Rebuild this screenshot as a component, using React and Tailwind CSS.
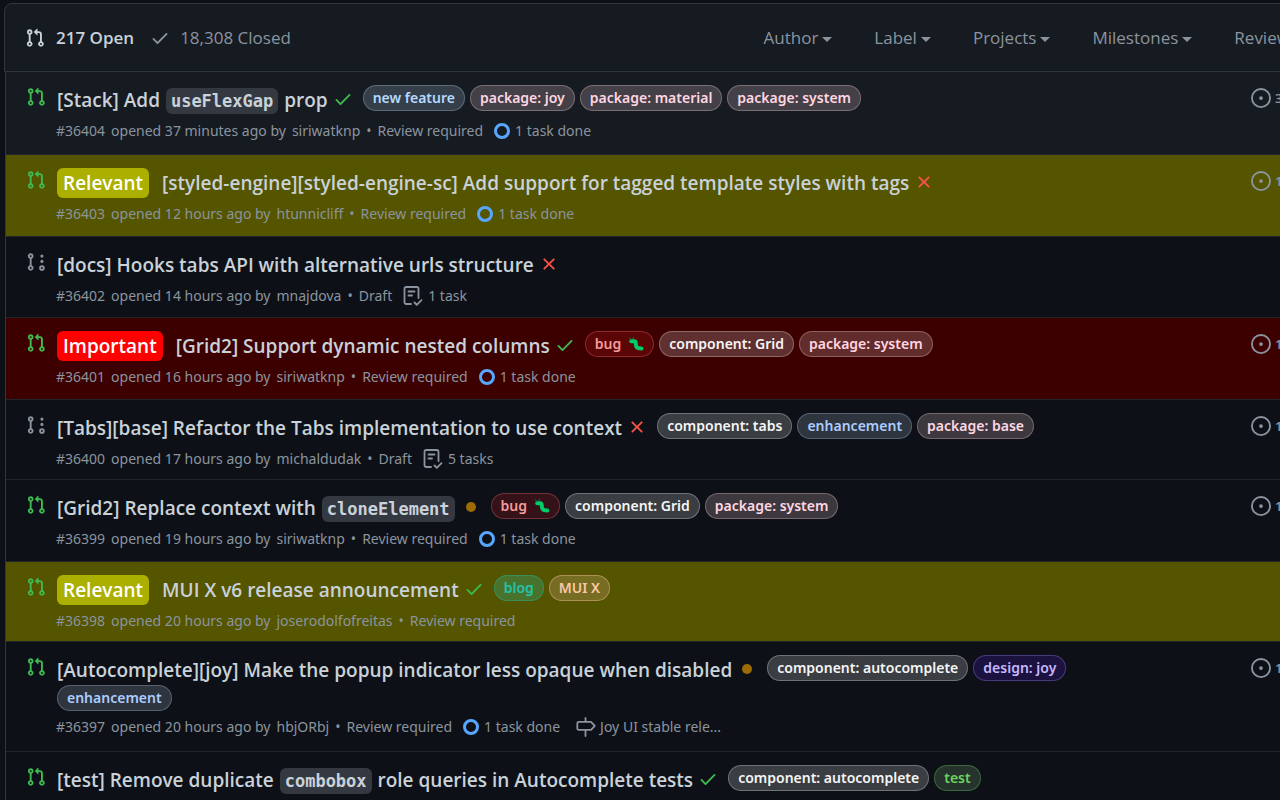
const PATHS = {
  pr: "M7.177 3.073L9.573.677A.25.25 0 0110 .854v4.792a.25.25 0 01-.427.177L7.177 3.427a.25.25 0 010-.354zM3.75 2.5a.75.75 0 100 1.5.75.75 0 000-1.5zm-2.25.75a2.25 2.25 0 113 2.122v5.256a2.251 2.251 0 11-1.5 0V5.372A2.25 2.25 0 011.5 3.25zM11 2.5h-1V4h1a1 1 0 011 1v5.628a2.251 2.251 0 101.5 0V5A2.5 2.5 0 0011 2.5zm1 10.25a.75.75 0 111.5 0 .75.75 0 01-1.5 0zM3.75 12a.75.75 0 100 1.5.75.75 0 000-1.5z",
  draft:
    "M3.75 1a2.25 2.25 0 00-.75 4.372v5.256a2.251 2.251 0 101.5 0V5.372A2.25 2.25 0 003.75 1zM3 3.25a.75.75 0 111.5 0 .75.75 0 01-1.5 0zM3.75 12a.75.75 0 100 1.5.75.75 0 000-1.5zM12.75 15a2.25 2.25 0 100-4.5 2.25 2.25 0 000 4.5zm0-3a.75.75 0 100 1.5.75.75 0 000-1.5zM14 7.5a1.25 1.25 0 11-2.5 0 1.25 1.25 0 012.5 0zm0-4.25a1.25 1.25 0 11-2.5 0 1.25 1.25 0 012.5 0z",
  check:
    "M13.78 4.22a.75.75 0 010 1.06l-7.25 7.25a.75.75 0 01-1.06 0L2.22 9.28a.75.75 0 011.06-1.06L6 10.94l6.72-6.72a.75.75 0 011.06 0z",
  x: "M3.72 3.72a.75.75 0 011.06 0L8 6.94l3.22-3.22a.75.75 0 111.06 1.06L9.06 8l3.22 3.22a.75.75 0 11-1.06 1.06L8 9.06l-3.22 3.22a.75.75 0 01-1.06-1.06L6.94 8 3.72 4.78a.75.75 0 010-1.06z",
  dot: "M8 4a4 4 0 100 8 4 4 0 000-8z",
  issue:
    "M8 9.5a1.5 1.5 0 100-3 1.5 1.5 0 000 3zM8 0a8 8 0 100 16A8 8 0 008 0zM1.5 8a6.5 6.5 0 1113 0 6.5 6.5 0 01-13 0z",
};

function Octicon({ name, className }) {
  return (
    <svg viewBox="0 0 16 16" fill="currentColor" fillRule="evenodd" aria-hidden="true" className={"shrink-0 " + className}>
      <path d={PATHS[name]} />
    </svg>
  );
}

function TaskListIcon() {
  return (
    <svg viewBox="0 0 20 20" fill="none" stroke="currentColor" strokeWidth="1.8" strokeLinecap="round" strokeLinejoin="round" aria-hidden="true" className="size-5 shrink-0">
      <path d="M8 18H3.200a1.700 1.700 0 0 1-1.700-1.700V2.700A1.700 1.700 0 0 1 3.200 1h10.600a1.700 1.700 0 0 1 1.700 1.700v9.300M5.500 5.500h6M5.500 9.500h3.500M11.500 16.500l2.300 2.300 4.700-4.700" />
    </svg>
  );
}

function MilestoneIcon() {
  return (
    <svg viewBox="0 0 20 20" fill="none" stroke="currentColor" strokeWidth="1.8" strokeLinecap="round" strokeLinejoin="round" aria-hidden="true" className="size-5 shrink-0">
      <path d="M9.500 1v3.500M9.500 13.500v5.500M2.800 4.900h12.200l3.800 4-3.800 4H2.800a1.500 1.500 0 0 1-1.500-1.500V6.400a1.500 1.500 0 0 1 1.500-1.500z" />
    </svg>
  );
}

function Bug() {
  return (
    <svg viewBox="0 0 16 16" aria-hidden="true" className="ml-[2px] size-4 shrink-0">
      <path d="M3.200 5.300h3C8.800 5.300 7 9 8.600 11c1 1.300 2.600 1.500 4.800 1.500" fill="none" stroke="#00cc6a" strokeWidth="4" strokeLinecap="round" strokeLinejoin="round" />
      <path d="M1.200 1.600l1.600 1.800M5.600 1.200l-1 1.900" stroke="#0a8a4a" strokeWidth="1" />
    </svg>
  );
}

const TONES = {
  blue: "bg-[#b5d2ea]/20 border-[#b5d2ea]/30 text-[#b5d9ff]",
  steel: "bg-[#b5c9e3]/20 border-[#b5c9e3]/30 text-[#adccff]",
  pink: "bg-[#fad6dc]/20 border-[#fad6dc]/30 text-[#ffd6e2]",
  white: "bg-[#f0f0f0]/20 border-[#f0f0f0]/30 text-[#f5f5f5]",
  red: "bg-[#d11a20]/20 border-[#f87c7e]/30 text-[#f89a9b]",
  teal: "bg-[#2fb893]/30 border-[#1fb8a3]/40 text-[#22c3ad]",
  peach: "bg-[#fac8a8]/20 border-[#fac8a8]/40 text-[#fac8a8]",
  purple: "bg-[#1c1240] border-[#8a78d8]/40 text-[#c5b8ff]",
  green: "bg-[#8ab884]/20 border-[#5fb85a]/40 text-[#6bd35e]",
};

function Label({ tone, bug, children }) {
  return (
    <a href="#label" className={"inline-flex h-[26px] items-center gap-[5px] rounded-full border px-[9px] font-['Noto_Sans',sans-serif] text-[14px] leading-5 font-semibold whitespace-nowrap " + TONES[tone]}>
      {children}
      {bug && <Bug />}
    </a>
  );
}

function Code({ children }) {
  return (
    <code className="mx-px rounded-md bg-[#343941] px-[5px] py-[3px] font-['DejaVu_Sans_Mono',monospace] text-[17px] leading-5 font-bold">
      {children}
    </code>
  );
}

const CHIPS = {
  Relevant: "bg-[#abaf00]",
  Important: "bg-[#ff0000]",
};

const STATUS = {
  check: "text-[#3fb950]",
  x: "text-[#f85149]",
  dot: "text-[#9e6a03]",
};

const ROWS = [
  {
    id: 36404, bg: "bg-[#161b22] min-h-[83px]", title: <>[Stack] Add <Code>useFlexGap</Code> prop</>, status: "check",
    labels: [["new feature", "blue"], ["package: joy", "pink"], ["package: material", "pink"], ["package: system", "pink"]],
    opened: "opened 37 minutes ago by", author: "siriwatknp", review: "Review required", done: true, linked: 3,
  },
  {
    id: 36403, bg: "bg-[#555500] min-h-[82px]", chip: "Relevant", title: "[styled-engine][styled-engine-sc] Add support for tagged template styles with tags", status: "x",
    labels: [], opened: "opened 12 hours ago by", author: "htunnicliff", review: "Review required", done: true, linked: 1,
  },
  {
    id: 36402, bg: "min-h-[81px]", draft: true, title: "[docs] Hooks tabs API with alternative urls structure", status: "x",
    labels: [], opened: "opened 14 hours ago by", author: "mnajdova", review: "Draft", tasks: "1 task",
  },
  {
    id: 36401, bg: "bg-[#3d0000] min-h-[82px]", chip: "Important", title: "[Grid2] Support dynamic nested columns", status: "check",
    labels: [["bug", "red", true], ["component: Grid", "white"], ["package: system", "pink"]],
    opened: "opened 16 hours ago by", author: "siriwatknp", review: "Review required", done: true, linked: 1,
  },
  {
    id: 36400, bg: "min-h-[80px]", draft: true, title: "[Tabs][base] Refactor the Tabs implementation to use context", status: "x",
    labels: [["component: tabs", "white"], ["enhancement", "steel"], ["package: base", "pink"]],
    opened: "opened 17 hours ago by", author: "michaldudak", review: "Draft", tasks: "5 tasks", linked: 1,
  },
  {
    id: 36399, bg: "min-h-[82px]", title: <>[Grid2] Replace context with <Code>cloneElement</Code></>, status: "dot",
    labels: [["bug", "red", true], ["component: Grid", "white"], ["package: system", "pink"]],
    opened: "opened 19 hours ago by", author: "siriwatknp", review: "Review required", done: true, linked: 1,
  },
  {
    id: 36398, bg: "bg-[#555500] min-h-[80px]", chip: "Relevant", title: "MUI X v6 release announcement", status: "check",
    labels: [["blog", "teal"], ["MUI X", "peach"]],
    opened: "opened 20 hours ago by", author: "joserodolfofreitas", review: "Review required",
  },
  {
    id: 36397, bg: "min-h-[110px]", title: "[Autocomplete][joy] Make the popup indicator less opaque when disabled", status: "dot",
    labels: [["component: autocomplete", "white"], ["design: joy", "purple"], ["enhancement", "steel"]],
    opened: "opened 20 hours ago by", author: "hbjORbj", review: "Review required", done: true, milestone: "Joy UI stable rele...", linked: 1,
  },
  {
    id: 36396, bg: "min-h-[80px]", title: <>[test] Remove duplicate <Code>combobox</Code> role queries in Autocomplete tests</>, status: "check",
    labels: [["component: autocomplete", "white"], ["test", "green"]],
  },
];

function Row({ row }) {
  return (
    <li className={"flex items-start border-b border-[#21262d] pl-5 " + row.bg}>
      <Octicon name={row.draft ? "draft" : "pr"} className={"mt-[15px] size-5 " + (row.draft ? "text-[#8b949e]" : "text-[#3fb950]")} />
      <div className="min-w-0 flex-1 pt-[13px] pl-[10px]">
        <div className="flex flex-wrap items-start gap-x-[5px] pl-px">
          {row.chip && (
            <span className={"mr-2 rounded-md px-[6px] text-[19px] leading-[30px] font-semibold text-white " + CHIPS[row.chip]}>
              {row.chip}
            </span>
          )}
          <a href="#pull" className="text-[19px] leading-[30px] font-semibold text-[#c9d1d9]">
            {row.title}
          </a>
          <Octicon name={row.status} className={"mt-1 mr-[5px] size-5 " + STATUS[row.status]} />
          {row.labels.map(([text, tone, bug]) => (
            <Label key={text} tone={tone} bug={bug}>{text}</Label>
          ))}
        </div>
        {row.opened && (
          <div className="flex items-center gap-[11px] pt-1 font-['Noto_Sans',sans-serif] text-[14px] leading-6 text-[#8b949e]">
            <div className="flex gap-[6px]">
              <span>#{row.id}</span>
              <span>{row.opened}</span>
              <a href="#author">{row.author}</a>
              <span>•</span>
              <span>{row.review}</span>
            </div>
            {row.done && (
              <span className="flex items-center gap-[5px]">
                <span className="size-4 rounded-full border-3 border-[#58a6ff]" />
                1 task done
              </span>
            )}
            {row.tasks && <span className="flex items-center gap-[5px]"><TaskListIcon />{row.tasks}</span>}
            {row.milestone && <a href="#milestone" className="ml-[5px] flex items-center gap-1"><MilestoneIcon />{row.milestone}</a>}
          </div>
        )}
      </div>
      <div className="w-[314px] shrink-0 pt-4 pl-[105px]">
        {row.linked && (
          <a href="#linked" className="flex items-center gap-1 text-[13px] leading-5 font-semibold text-[#8b949e]">
            <Octicon name="issue" className="size-5" />
            {row.linked}
          </a>
        )}
      </div>
    </li>
  );
}

const FILTERS = ["Author", "Label", "Projects", "Milestones", "Reviews"];

export default function App() {
  return (
    <main className="h-screen overflow-hidden bg-[#0d1117] pt-[3px] pl-1 font-['Open_Sans','Noto_Sans',sans-serif]">
      <div className="-mr-[180px]">
        <header className="flex h-[69px] items-center rounded-tl-lg border border-[#30363d] bg-[#161b22] pl-5 text-[17px] leading-6">
          <a href="#open" className="flex items-center gap-[11px] font-semibold text-[#c9d1d9]">
            <Octicon name="pr" className="size-5" />
            217 Open
          </a>
          <a href="#closed" className="ml-4 flex flex-1 items-center gap-[10px] text-[#8b949e]">
            <Octicon name="check" className="size-5" />
            18,308 Closed
          </a>
          <nav className="flex gap-[42px] pr-[147px] text-[#8b949e]">
            {FILTERS.map((f) => (
              <button key={f} type="button" className="flex items-center gap-1">
                {f}
                <span className="mt-1 border-x-5 border-t-5 border-x-transparent border-t-[#8b949e]" />
              </button>
            ))}
          </nav>
        </header>
        <ul className="ml-px border-l border-[#30363d]">
          {ROWS.map((row) => <Row key={row.id} row={row} />)}
        </ul>
      </div>
    </main>
  );
}
